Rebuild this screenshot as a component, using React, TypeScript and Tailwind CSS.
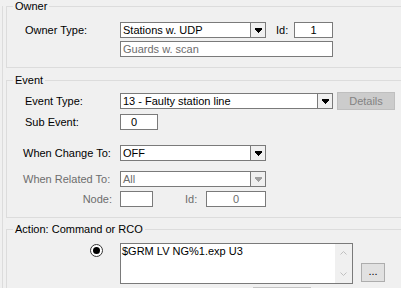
import React from 'react';

const Arrow = ({ color }: { color: string }) => (
  <svg width="7" height="5" viewBox="0 0 7 5" fill={color} shapeRendering="crispEdges">
    <rect x="0" y="0" width="7" height="2" />
    <rect x="1" y="2" width="5" height="1" />
    <rect x="2" y="3" width="3" height="1" />
    <rect x="3" y="4" width="1" height="1" />
  </svg>
);

const Combo = ({ value, className, disabled }: { value: string; className: string; disabled?: boolean }) => (
  <div className={`flex h-[16px] border border-[#7a7a7a] bg-white ${className}`}>
    <div className={`flex-1 pl-[2px] leading-[14px] ${disabled ? 'text-[#6d6d6d]' : 'text-black'}`}>{value}</div>
    <div className="w-[15px] border-l border-[#7a7a7a] bg-[#f0f0f0] flex items-center justify-center">
      <Arrow color={disabled ? '#a0a0a0' : '#000'} />
    </div>
  </div>
);

const Group = ({ title, className, children }: { title: string; className: string; children: React.ReactNode }) => (
  <div className={`border border-[#dcdcdc] ${className}`}>
    <span className="block w-fit -mt-[7px] ml-[6px] px-[2px] leading-[13px] bg-[#f0f0f0]">{title}</span>
    {children}
  </div>
);

export default function App() {
  return (
    <div className="w-[401px] h-[288px] overflow-hidden bg-[#f0f0f0] font-['Liberation_Sans',Arial,sans-serif] text-[11px] leading-[13px] text-black">
      <div className="ml-[2px] h-full w-[430px] border-l border-[#dcdcdc] pl-[3px]">
        {/* Owner */}
        <Group title="Owner" className="mt-[6px] pb-[10px]">
          <div className="mt-[9px] flex items-center h-[16px] pl-[18px]">
            <span className="w-[95px]">Owner Type:</span>
            <Combo value="Stations w. UDP" className="w-[146px]" />
            <span className="ml-[10px] w-[18px]">Id:</span>
            <div className="w-[39px] h-[16px] border border-[#7a7a7a] bg-white text-center leading-[14px]">1</div>
          </div>
          <div className="mt-[3px] ml-[113px] w-[213px] h-[16px] border border-[#7a7a7a] bg-white pl-[2px] leading-[14px] text-[#6d6d6d]">
            Guards w. scan
          </div>
        </Group>

        {/* Event */}
        <Group title="Event" className="mt-[12px] pb-[10px]">
          <div className="mt-[6px] flex items-center h-[16px] pl-[18px]">
            <span className="w-[95px]">Event Type:</span>
            <Combo value="13 - Faulty station line" className="w-[213px]" />
            <button className="ml-[4px] w-[58px] h-[18px] border border-[#bfbfbf] bg-[#cccccc] text-[#838383] leading-[16px]">
              Details
            </button>
          </div>
          <div className="mt-[5px] flex items-center h-[16px] pl-[18px]">
            <span className="w-[95px]">Sub Event:</span>
            <div className="w-[38px] h-[16px] border border-[#7a7a7a] bg-white pl-[10px] leading-[14px]">0</div>
          </div>
          <div className="mt-[15px] flex items-center h-[16px] pl-[16px]">
            <span className="w-[97px]">When Change To:</span>
            <Combo value="OFF" className="w-[146px]" />
          </div>
          <div className="mt-[10px] flex items-center h-[16px] pl-[16px]">
            <span className="w-[97px] text-[#6d6d6d]">When Related To:</span>
            <Combo value="All" className="w-[146px]" disabled />
          </div>
          <div className="mt-[4px] flex items-center h-[16px] text-[#6d6d6d]">
            <span className="w-[105px] text-right">Node:</span>
            <div className="ml-[8px] w-[33px] h-[16px] border border-[#7a7a7a] bg-white" />
            <span className="ml-[32px] w-[21px]">Id:</span>
            <div className="w-[60px] h-[16px] border border-[#7a7a7a] bg-white text-center leading-[14px]">0</div>
          </div>
        </Group>

        {/* Action */}
        <Group title="Action: Command or RCO" className="mt-[11px] h-[100px]">
          <div className="mt-[7px] flex items-start">
            <div className="ml-[83px] mt-[1px] w-[13px] h-[13px] rounded-full border border-[#333333] bg-white flex items-center justify-center">
              <div className="w-[7px] h-[7px] rounded-full bg-black" />
            </div>
            <div className="ml-[17px] w-[233px] h-[41px] border border-[#7a7a7a] bg-white flex">
              <div className="flex-1 pl-[1px] pt-[1px]">$GRM LV NG%1.exp U3</div>
              <div className="w-[17px] bg-[#f0f0f0] flex flex-col items-center justify-between py-[7px]">
                <svg width="7" height="4" viewBox="0 0 7 4" fill="none" stroke="#c0c0c0" strokeWidth="1">
                  <path d="M0.5 3.5L3.5 0.5L6.5 3.5" />
                </svg>
                <svg width="7" height="4" viewBox="0 0 7 4" fill="none" stroke="#c0c0c0" strokeWidth="1">
                  <path d="M0.5 0.5L3.5 3.5L6.5 0.5" />
                </svg>
              </div>
            </div>
            <button className="ml-[8px] mt-[20px] w-[24px] h-[19px] border border-[#adadad] bg-[#e1e1e1] leading-[14px] pb-[3px]">
              ...
            </button>
          </div>
          <div className="mt-[3px] ml-[246px] w-[58px] h-[10px] border border-[#c4c4c4] bg-[#e1e1e1]" />
        </Group>
      </div>
    </div>
  );
}
